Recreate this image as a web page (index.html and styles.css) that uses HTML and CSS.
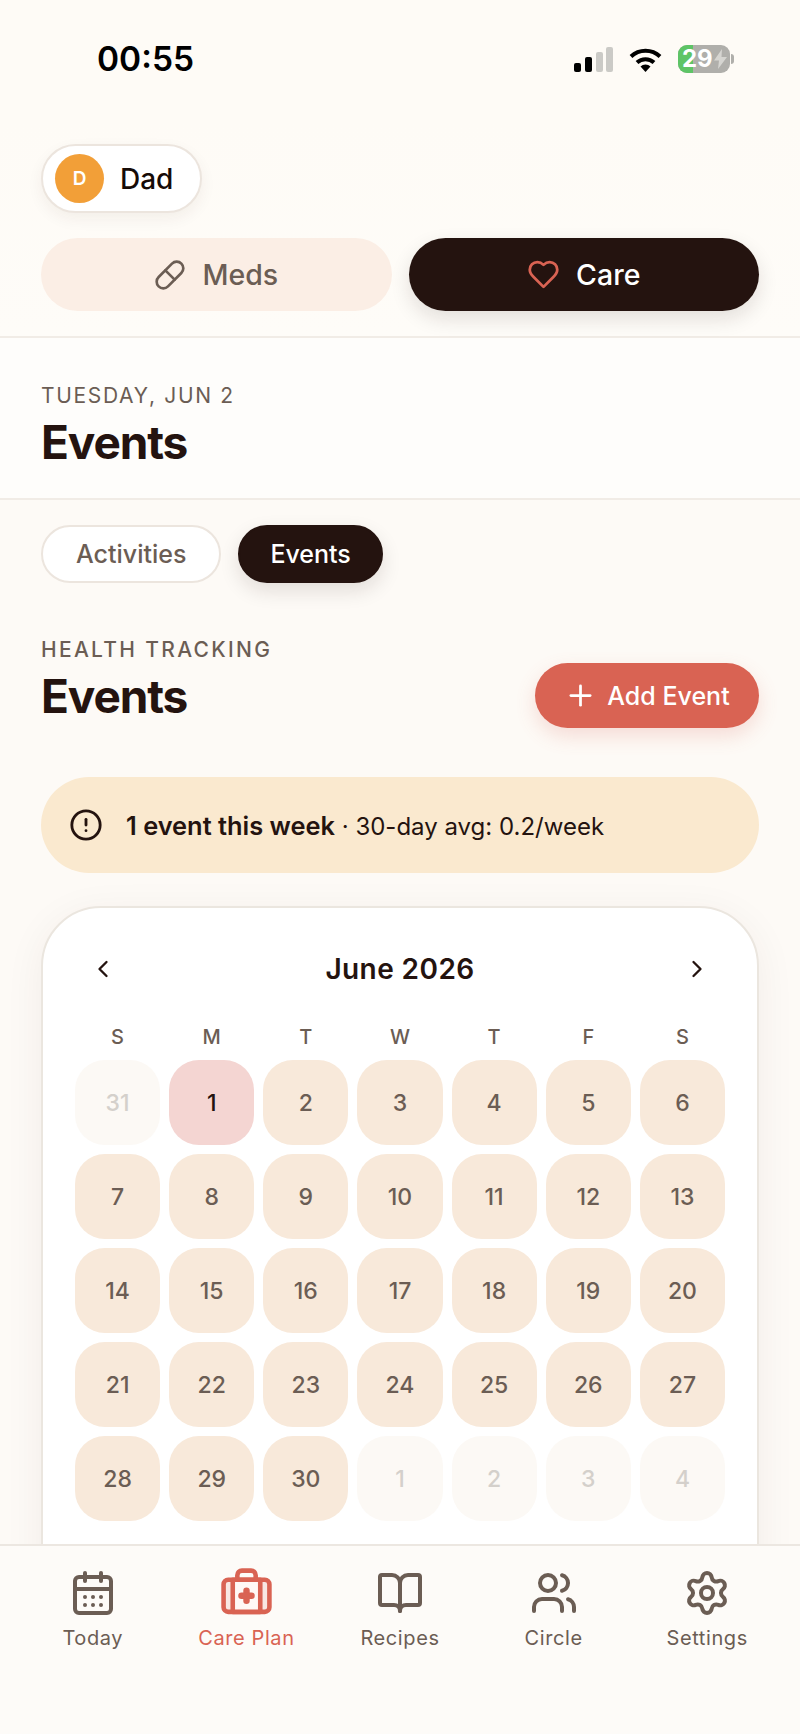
FILE: index.html
```html
<!DOCTYPE html>
<html lang="en">
<head>
    <meta charset="UTF-8">
    <meta name="viewport" content="width=device-width, initial-scale=1.0">
    <title>Events</title>
    <link rel="stylesheet" href="styles.css">
</head>
<body>
<div class="app">
    <div class="status-bar">
        <span class="time">00:55</span>
        <div class="status-icons">
            <svg class="signal" width="39" height="25" viewBox="0 0 39 25">
                <rect x="0" y="16" width="7" height="9" rx="2" fill="#000"/>
                <rect x="11" y="10" width="7" height="15" rx="2" fill="#000"/>
                <rect x="22" y="5" width="7" height="20" rx="2" fill="#cbcac6"/>
                <rect x="32" y="0" width="7" height="25" rx="2" fill="#cbcac6"/>
            </svg>
            <svg class="wifi" width="33" height="25" viewBox="0 0 33 25">
                <path d="M2 9.5a21 21 0 0 1 29 0" fill="none" stroke="#000" stroke-width="4"/>
                <path d="M8 15.5a12.5 12.5 0 0 1 17 0" fill="none" stroke="#000" stroke-width="4"/>
                <path d="M11.5 19.5a7 7 0 0 1 10 0L16.5 25z" fill="#000"/>
            </svg>
            <div class="battery">
                <div class="battery-body">
                    <span class="battery-level"></span>
                    <span class="battery-num">29</span>
                    <svg class="bolt" width="13" height="20" viewBox="0 0 13 20"><path d="M8 0 0 11.5h5L4 20l9-12H7.5z" fill="#d6d5d1"/></svg>
                </div>
                <span class="battery-nub"></span>
            </div>
        </div>
    </div>

    <section class="top">
        <div class="person-pill">
            <span class="avatar">D</span>
            <span class="person-name">Dad</span>
        </div>
        <div class="mode-tabs">
            <div class="mode-tab">
                <svg class="icon" width="32" height="32" viewBox="0 0 24 24"><path d="m10.5 20.5 10-10a4.95 4.95 0 1 0-7-7l-10 10a4.95 4.95 0 1 0 7 7Z"/><path d="m8.5 8.5 7 7"/></svg>
                Meds
            </div>
            <div class="mode-tab active">
                <svg class="icon heart" width="33" height="33" viewBox="0 0 24 24"><path d="M19 14c1.49-1.46 3-3.21 3-5.5A5.5 5.5 0 0 0 16.5 3c-1.76 0-3 .5-4.5 2-1.5-1.5-2.74-2-4.5-2A5.5 5.5 0 0 0 2 8.5c0 2.3 1.5 4.05 3 5.5l7 7Z"/></svg>
                Care
            </div>
        </div>
    </section>

    <header class="page-head">
        <div class="eyebrow date">TUESDAY, JUN 2</div>
        <h1 class="title">Events</h1>
    </header>

    <main class="content">
        <div class="sub-tabs">
            <div class="sub-tab">Activities</div>
            <div class="sub-tab active">Events</div>
        </div>

        <div class="section-head">
            <div class="section-title">
                <div class="eyebrow health">HEALTH TRACKING</div>
                <h2 class="title">Events</h2>
            </div>
            <div class="add-btn">
                <svg class="icon" width="33" height="33" viewBox="0 0 24 24"><path d="M5 12h14"/><path d="M12 5v14"/></svg>
                Add Event
            </div>
        </div>

        <div class="banner">
            <svg class="icon" width="34" height="34" viewBox="0 0 24 24"><circle cx="12" cy="12" r="10"/><path d="M12 8v4"/><path d="M12 16h.01"/></svg>
            <span><strong>1 event this week</strong> · 30-day avg: 0.2/week</span>
        </div>

        <div class="calendar">
            <div class="cal-head">
                <svg class="icon" width="28" height="28" viewBox="0 0 24 24"><path d="m15 18-6-6 6-6"/></svg>
                <span class="cal-month">June 2026</span>
                <svg class="icon" width="28" height="28" viewBox="0 0 24 24"><path d="m9 18 6-6-6-6"/></svg>
            </div>
            <div class="cal-grid">
                <div class="dow">S</div><div class="dow">M</div><div class="dow">T</div><div class="dow">W</div><div class="dow">T</div><div class="dow">F</div><div class="dow">S</div>
                <div class="day out">31</div><div class="day marked">1</div><div class="day">2</div><div class="day">3</div><div class="day">4</div><div class="day">5</div><div class="day">6</div>
                <div class="day">7</div><div class="day">8</div><div class="day">9</div><div class="day">10</div><div class="day">11</div><div class="day">12</div><div class="day">13</div>
                <div class="day">14</div><div class="day">15</div><div class="day">16</div><div class="day">17</div><div class="day">18</div><div class="day">19</div><div class="day">20</div>
                <div class="day">21</div><div class="day">22</div><div class="day">23</div><div class="day">24</div><div class="day">25</div><div class="day">26</div><div class="day">27</div>
                <div class="day">28</div><div class="day">29</div><div class="day">30</div><div class="day out">1</div><div class="day out">2</div><div class="day out">3</div><div class="day out">4</div>
            </div>
        </div>
    </main>

    <nav class="bottom-nav">
        <div class="nav-item">
            <svg class="icon" width="48" height="48" viewBox="0 0 24 24"><path d="M8 2v4"/><path d="M16 2v4"/><rect x="3" y="4" width="18" height="18" rx="2"/><path d="M3 10h18"/><path d="M8 14h.01"/><path d="M12 14h.01"/><path d="M16 14h.01"/><path d="M8 18h.01"/><path d="M12 18h.01"/><path d="M16 18h.01"/></svg>
            Today
        </div>
        <div class="nav-item active">
            <svg class="icon" width="55" height="55" viewBox="0 0 24 24"><rect x="2" y="6" width="20" height="14" rx="2" class="tint"/><rect x="6" y="6" width="12" height="14" class="panel"/><path d="M12 10.8v4.4" class="cross"/><path d="M14.2 13H9.8" class="cross"/><path d="M16 6V4a2 2 0 0 0-2-2h-4a2 2 0 0 0-2 2v2"/></svg>
            Care Plan
        </div>
        <div class="nav-item">
            <svg class="icon" width="48" height="48" viewBox="0 0 24 24"><path d="M12 7v14"/><path d="M3 18a1 1 0 0 1-1-1V4a1 1 0 0 1 1-1h5a4 4 0 0 1 4 4 4 4 0 0 1 4-4h5a1 1 0 0 1 1 1v13a1 1 0 0 1-1 1h-6a3 3 0 0 0-3 3 3 3 0 0 0-3-3z"/></svg>
            Recipes
        </div>
        <div class="nav-item">
            <svg class="icon" width="48" height="48" viewBox="0 0 24 24"><path d="M16 21v-2a4 4 0 0 0-4-4H6a4 4 0 0 0-4 4v2"/><circle cx="9" cy="7" r="4"/><path d="M22 21v-2a4 4 0 0 0-3-3.87"/><path d="M16 3.13a4 4 0 0 1 0 7.75"/></svg>
            Circle
        </div>
        <div class="nav-item">
            <svg class="icon" width="48" height="48" viewBox="0 0 24 24"><path d="M9.671 4.136a2.34 2.34 0 0 1 4.659 0 2.34 2.34 0 0 0 3.319 1.915 2.34 2.34 0 0 1 2.33 4.033 2.34 2.34 0 0 0 0 3.831 2.34 2.34 0 0 1-2.33 4.033 2.34 2.34 0 0 0-3.319 1.915 2.34 2.34 0 0 1-4.659 0 2.34 2.34 0 0 0-3.32-1.915 2.34 2.34 0 0 1-2.33-4.033 2.34 2.34 0 0 0 0-3.831A2.34 2.34 0 0 1 6.35 6.051a2.34 2.34 0 0 0 3.32-1.915"/><circle cx="12" cy="12" r="3"/></svg>
            Settings
        </div>
    </nav>
</div>
</body>
</html>
```

FILE: styles.css
```css
* {
    box-sizing: border-box;
}
body {
    margin: 0;
    font-family: Inter, "Liberation Sans", sans-serif;
    color: #24130f;
    background: #fdfaf6;
}
.app {
    width: 800px;
    height: 1734px;
    display: flex;
    flex-direction: column;
    overflow: hidden;
}
.icon {
    fill: none;
    stroke: currentColor;
    stroke-width: 2;
    stroke-linecap: round;
    stroke-linejoin: round;
    flex: none;
}

/* status bar */
.status-bar {
    height: 120px;
    padding: 40px 66px 0 97px;
    display: flex;
    justify-content: space-between;
    align-items: flex-start;
    background: #fefbf6;
}
.time {
    font-size: 33.5px;
    font-weight: 600;
    line-height: 39px;
    color: #000;
}
.status-icons {
    display: flex;
    align-items: center;
    gap: 16px;
    margin-top: 5px;
}
.battery {
    display: flex;
    align-items: center;
    gap: 1px;
}
.battery-body {
    position: relative;
    width: 52px;
    height: 28px;
    border-radius: 9px;
    background: #b0afab;
    overflow: hidden;
    display: flex;
    align-items: center;
    padding-left: 4px;
}
.battery-level {
    position: absolute;
    left: 0;
    top: 0;
    bottom: 0;
    width: 15px;
    background: #5ec466;
}
.battery-num {
    position: relative;
    color: #fff;
    font-size: 24px;
    font-weight: 700;
    line-height: 28px;
}
.bolt {
    position: relative;
    margin-left: 1px;
}
.battery-nub {
    width: 3px;
    height: 10px;
    border-radius: 0 3px 3px 0;
    background: #b0afab;
}

/* person + mode tabs */
.top {
    height: 218px;
    padding: 24px 41px 0;
    border-bottom: 2px solid #f1ece6;
    background: linear-gradient(#fefbf6, #fefcf8);
}
.person-pill {
    width: 161px;
    height: 69px;
    display: flex;
    align-items: center;
    gap: 16px;
    padding-left: 12px;
    background: #fff;
    border: 2px solid #ece5de;
    border-radius: 35px;
    box-shadow: 0 6px 16px rgba(60, 30, 10, .06);
}
.avatar {
    width: 49px;
    height: 49px;
    border-radius: 50%;
    background: #f29f38;
    color: #fff;
    font-size: 19px;
    font-weight: 600;
    display: flex;
    align-items: center;
    justify-content: center;
}
.person-name {
    font-size: 28px;
    font-weight: 500;
    color: #160b07;
}
.mode-tabs {
    display: flex;
    gap: 17px;
    margin-top: 25px;
}
.mode-tab {
    flex: 1;
    height: 73px;
    border-radius: 37px;
    background: #fbeee5;
    color: #6b5d54;
    font-size: 28.5px;
    font-weight: 500;
    display: flex;
    align-items: center;
    justify-content: center;
    gap: 16px;
}
.mode-tab.active {
    background: #24130f;
    color: #fff;
    box-shadow: 0 8px 20px rgba(37, 20, 15, .12);
}
.heart {
    color: #d96353;
}

/* page header */
.page-head {
    height: 162px;
    padding: 46px 41px 0;
    border-bottom: 2px solid #f1ece6;
    background: #fefdfb;
}
.eyebrow {
    font-size: 21px;
    line-height: 24px;
    color: #6b5d54;
    letter-spacing: .11em;
}
.date {
    letter-spacing: .08em;
}
.health {
    font-weight: 500;
}
.title {
    margin: 7px 0 0;
    font-size: 46px;
    line-height: 54px;
    font-weight: 700;
    letter-spacing: -.025em;
    color: #24130f;
}

/* content */
.content {
    flex: 1;
    min-height: 0;
    padding: 25px 41px 0;
}
.sub-tabs {
    display: flex;
    gap: 17px;
}
.sub-tab {
    height: 58px;
    padding: 0 33px;
    border-radius: 29px;
    border: 2px solid #ece5de;
    background: #fff;
    color: #6b5d54;
    font-size: 25px;
    font-weight: 500;
    display: flex;
    align-items: center;
}
.sub-tab.active {
    padding: 0 30px;
    border-color: #24130f;
    background: #24130f;
    color: #fff;
    box-shadow: 0 8px 20px rgba(37, 20, 15, .12);
}
.section-head {
    height: 90px;
    display: flex;
    justify-content: space-between;
    align-items: flex-end;
    margin-top: 55px;
}
.section-title {
    align-self: flex-start;
}
.add-btn {
    width: 224px;
    height: 65px;
    border-radius: 33px;
    background: #d96353;
    color: #fff;
    font-size: 25px;
    font-weight: 500;
    display: flex;
    align-items: center;
    justify-content: center;
    gap: 10px;
    box-shadow: 0 8px 20px rgba(217, 99, 83, .2);
}
.banner {
    height: 96px;
    margin-top: 49px;
    padding: 0 28px;
    border-radius: 48px;
    background: #fae9cf;
    font-size: 24px;
    display: flex;
    align-items: center;
    gap: 23px;
}
.banner strong {
    font-size: 25.4px;
    font-weight: 600;
}

/* calendar */
.calendar {
    margin-top: 33px;
    height: 800px;
    padding: 0 32px;
    background: #fff;
    border: 2px solid #ebe6df;
    border-radius: 60px;
    box-shadow: 0 8px 40px rgba(60, 30, 10, .06);
}
.cal-head {
    height: 122px;
    padding: 0 14px;
    display: flex;
    justify-content: space-between;
    align-items: center;
    margin-bottom: -7px;
}
.cal-month {
    font-size: 28px;
    font-weight: 600;
    letter-spacing: .015em;
}
.cal-grid {
    display: grid;
    grid-template-columns: repeat(7, 1fr);
    grid-template-rows: 28px;
    grid-auto-rows: 85px;
    gap: 9px;
}
.dow {
    text-align: center;
    font-size: 20px;
    line-height: 28px;
    font-weight: 500;
    color: #6b5d54;
}
.day {
    border-radius: 30px;
    background: #f8e9da;
    color: #6b5d54;
    font-size: 23px;
    font-weight: 500;
    display: flex;
    align-items: center;
    justify-content: center;
}
.day.out {
    background: #fcf9f5;
    color: #d4d0cb;
}
.day.marked {
    background: #f4d5d2;
    color: #24130f;
}

/* bottom nav */
.bottom-nav {
    height: 190px;
    flex: none;
    position: relative;
    padding: 23px 16px 0;
    display: grid;
    grid-template-columns: repeat(5, 1fr);
    border-top: 2px solid #ece7e1;
    background: #fdfbf8;
}
.nav-item {
    display: flex;
    flex-direction: column;
    align-items: center;
    gap: 9px;
    font-size: 20px;
    line-height: 24px;
    letter-spacing: .03em;
    color: #6b5d54;
}
.nav-item.active {
    color: #d96353;
}
.nav-item.active .icon {
    margin: -3.5px 0;
}
.tint {
    fill: rgba(217, 99, 83, .12);
}
.panel {
    fill: #fff8f5;
}
.cross {
    stroke-width: 2.8;
}
```
